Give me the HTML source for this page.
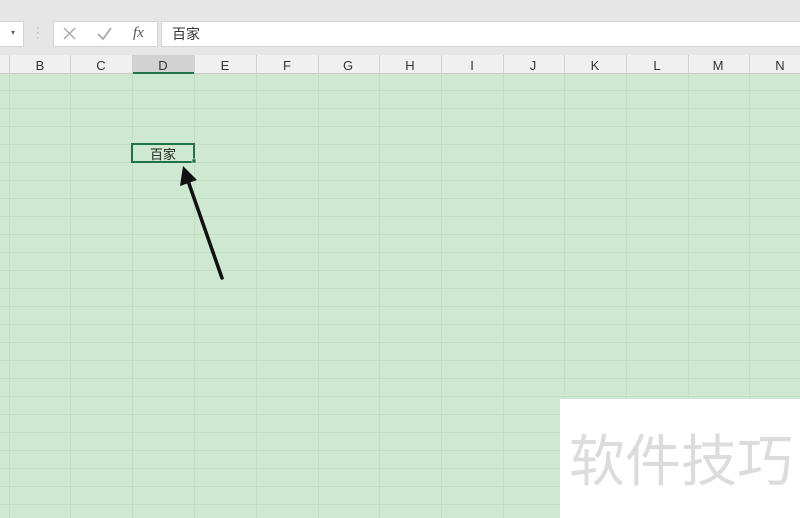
<!DOCTYPE html>
<html><head><meta charset="utf-8"><style>
body{margin:0;width:800px;height:518px;overflow:hidden;background:#cfe8d0;font-family:"Liberation Sans","Noto Sans CJK SC",sans-serif;position:relative}
.abs{position:absolute}
</style></head><body>
<div class="abs" style="left:0;top:0;width:800px;height:55px;background:#e6e6e6"></div>
<div class="abs" style="left:0;top:21px;width:23px;height:24px;background:#fff;border:1px solid #d4d4d4;border-left:none"></div>
<div class="abs" style="left:11px;top:28px;font-size:8px;color:#666">▾</div>
<div class="abs" style="left:36px;top:26px;font-size:11px;color:#999;line-height:5px">·<br>·<br>·</div>
<div class="abs" style="left:53px;top:21px;width:103px;height:24px;background:#fff;border:1px solid #d4d4d4"></div>
<svg class="abs" style="left:0;top:0" width="160" height="50">
<path d="M64 28 L75 39 M75 28 L64 39" stroke="#aaa" stroke-width="1.5"/>
<path d="M98 34 L103 39 L111 28" stroke="#aaa" stroke-width="1.8" fill="none"/>
</svg>
<div class="abs" style="left:133px;top:25px;font-size:15px;color:#555;font-style:italic;font-family:'Liberation Serif',serif">fx</div>
<div class="abs" style="left:161px;top:21px;width:640px;height:24px;background:#fff;border:1px solid #d4d4d4"></div>
<div class="abs" style="left:172px;top:24px;font-size:14px;color:#333">百家</div>
<div class="abs" style="left:0;top:55px;width:800px;height:18px;background:#f0f0f0;border-bottom:1px solid #c8c8c8"></div>
<div class="abs" style="left:132px;top:55px;width:62px;height:17px;background:#d2d2d2;border-bottom:2px solid #217346"></div>
<svg class="abs" style="left:0;top:0" width="800" height="518">
<g stroke="#c2dec4" stroke-width="1">
<line x1="0" y1="90.5" x2="800" y2="90.5"/><line x1="0" y1="108.5" x2="800" y2="108.5"/><line x1="0" y1="126.5" x2="800" y2="126.5"/><line x1="0" y1="144.5" x2="800" y2="144.5"/><line x1="0" y1="162.5" x2="800" y2="162.5"/><line x1="0" y1="180.5" x2="800" y2="180.5"/><line x1="0" y1="198.5" x2="800" y2="198.5"/><line x1="0" y1="216.5" x2="800" y2="216.5"/><line x1="0" y1="234.5" x2="800" y2="234.5"/><line x1="0" y1="252.5" x2="800" y2="252.5"/><line x1="0" y1="270.5" x2="800" y2="270.5"/><line x1="0" y1="288.5" x2="800" y2="288.5"/><line x1="0" y1="306.5" x2="800" y2="306.5"/><line x1="0" y1="324.5" x2="800" y2="324.5"/><line x1="0" y1="342.5" x2="800" y2="342.5"/><line x1="0" y1="360.5" x2="800" y2="360.5"/><line x1="0" y1="378.5" x2="800" y2="378.5"/><line x1="0" y1="396.5" x2="800" y2="396.5"/><line x1="0" y1="414.5" x2="800" y2="414.5"/><line x1="0" y1="432.5" x2="800" y2="432.5"/><line x1="0" y1="450.5" x2="800" y2="450.5"/><line x1="0" y1="468.5" x2="800" y2="468.5"/><line x1="0" y1="486.5" x2="800" y2="486.5"/><line x1="0" y1="504.5" x2="800" y2="504.5"/>
<line x1="9.5" y1="73" x2="9.5" y2="518"/><line x1="70.5" y1="73" x2="70.5" y2="518"/><line x1="132.5" y1="73" x2="132.5" y2="518"/><line x1="194.5" y1="73" x2="194.5" y2="518"/><line x1="256.5" y1="73" x2="256.5" y2="518"/><line x1="318.5" y1="73" x2="318.5" y2="518"/><line x1="379.5" y1="73" x2="379.5" y2="518"/><line x1="441.5" y1="73" x2="441.5" y2="518"/><line x1="503.5" y1="73" x2="503.5" y2="518"/><line x1="564.5" y1="73" x2="564.5" y2="518"/><line x1="626.5" y1="73" x2="626.5" y2="518"/><line x1="688.5" y1="73" x2="688.5" y2="518"/><line x1="749.5" y1="73" x2="749.5" y2="518"/>
</g>
<g stroke="#d0d0d0"><line x1="9.5" y1="55" x2="9.5" y2="73"/><line x1="70.5" y1="55" x2="70.5" y2="73"/><line x1="132.5" y1="55" x2="132.5" y2="73"/><line x1="194.5" y1="55" x2="194.5" y2="73"/><line x1="256.5" y1="55" x2="256.5" y2="73"/><line x1="318.5" y1="55" x2="318.5" y2="73"/><line x1="379.5" y1="55" x2="379.5" y2="73"/><line x1="441.5" y1="55" x2="441.5" y2="73"/><line x1="503.5" y1="55" x2="503.5" y2="73"/><line x1="564.5" y1="55" x2="564.5" y2="73"/><line x1="626.5" y1="55" x2="626.5" y2="73"/><line x1="688.5" y1="55" x2="688.5" y2="73"/><line x1="749.5" y1="55" x2="749.5" y2="73"/></g>
<g font-family="Liberation Sans" font-size="13" fill="#333" text-anchor="middle">
<text x="40" y="70">B</text><text x="101" y="70">C</text><text x="163" y="70">D</text><text x="225" y="70">E</text><text x="287" y="70">F</text><text x="348" y="70">G</text><text x="410" y="70">H</text><text x="472" y="70">I</text><text x="533" y="70">J</text><text x="595" y="70">K</text><text x="657" y="70">L</text><text x="718" y="70">M</text><text x="780" y="70">N</text>
</g>
<rect x="132" y="144" width="62" height="18" fill="none" stroke="#217346" stroke-width="2"/>
<rect x="192" y="159" width="4" height="4" fill="#217346" stroke="#fff" stroke-width="0.5"/>
<text x="163" y="159" font-family="Noto Sans CJK SC" font-size="13" fill="#222" text-anchor="middle">百家</text>
<line x1="222" y1="278" x2="187" y2="178" stroke="#111" stroke-width="3.5" stroke-linecap="round"/>
<polygon points="183,166 180,186 197,180" fill="#111"/>
</svg>
<div class="abs" style="left:560px;top:399px;width:240px;height:119px;background:#fff"></div>
<div class="abs" style="left:569px;top:418px;font-size:56px;color:#dcdcdc;font-family:'Noto Sans CJK SC',sans-serif;line-height:80px;white-space:nowrap">软件技巧</div>
</body></html>
